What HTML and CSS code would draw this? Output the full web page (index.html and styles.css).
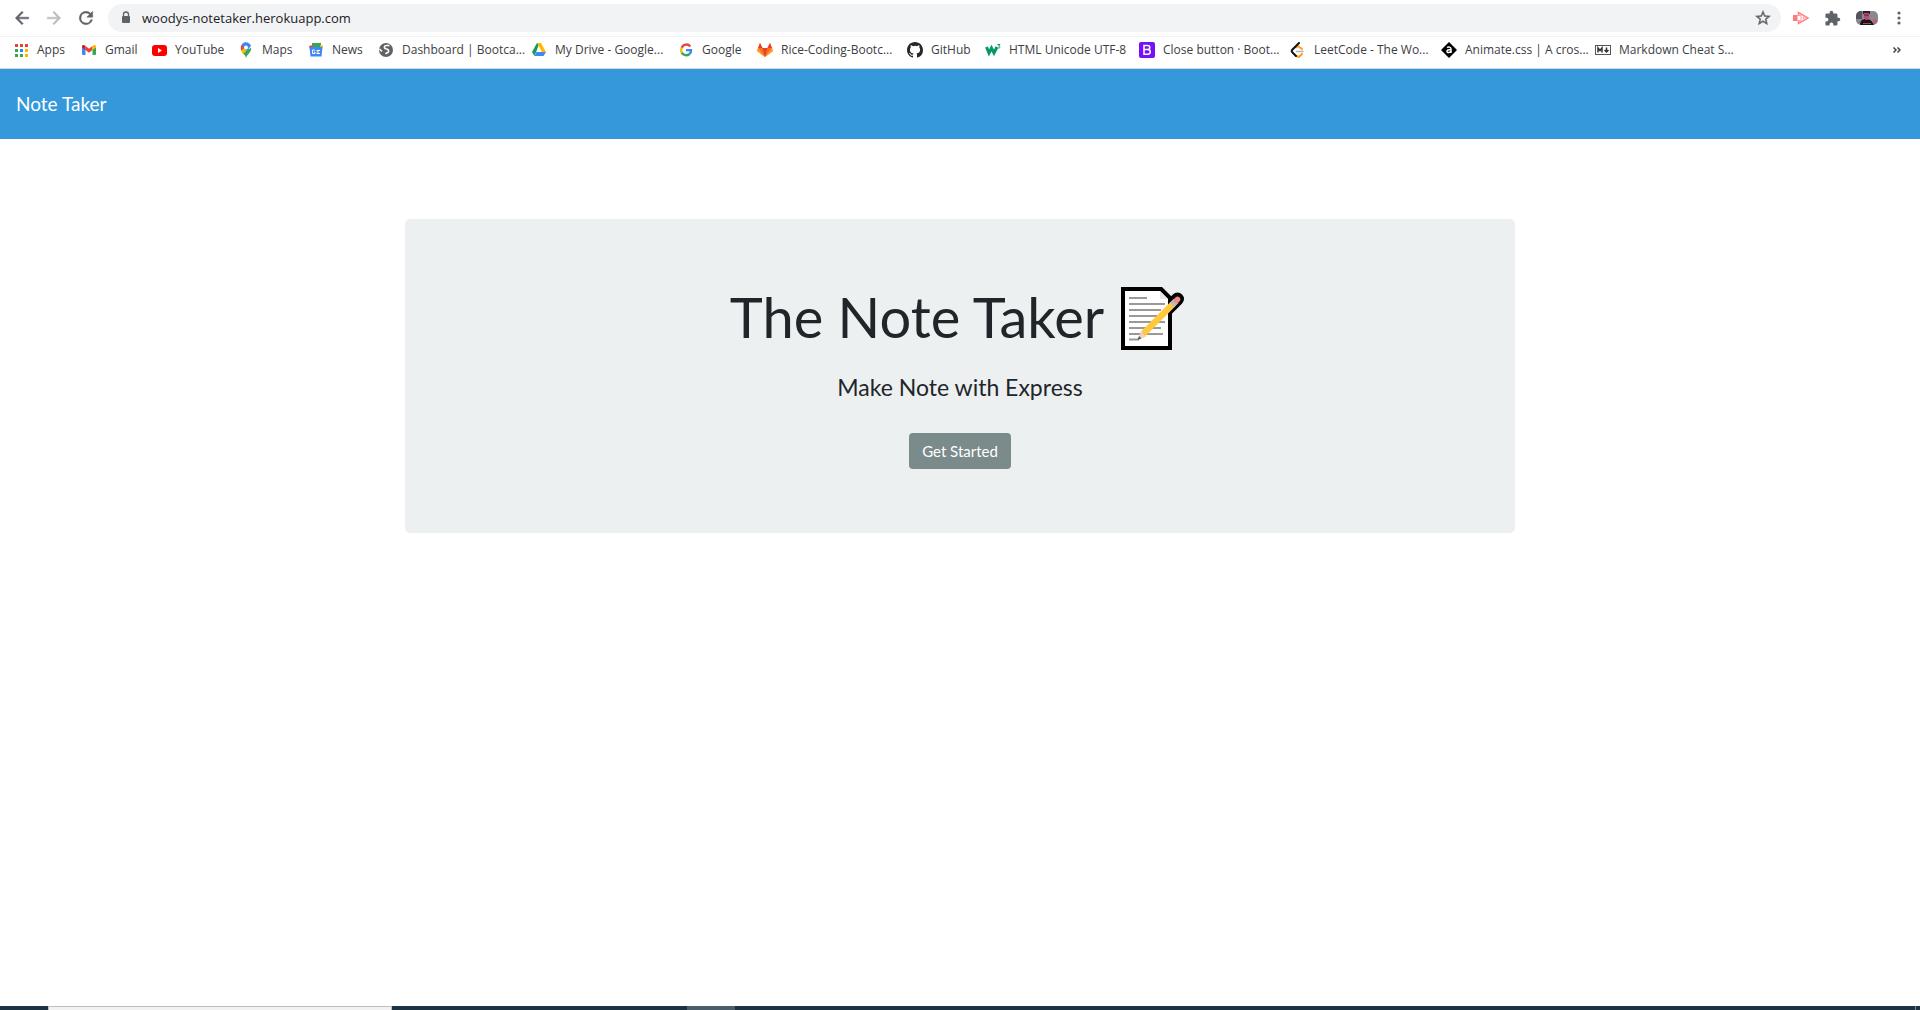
FILE: index.html
```html
<!DOCTYPE html>
<html lang="en">
<head>
<meta charset="utf-8">
<title>Note Taker</title>
<link rel="stylesheet" href="styles.css">
</head>
<body>
<header class="browser">
  <div class="toolbar">
    <button class="tool" aria-label="Back"><svg viewBox="0 0 24 24" width="20" height="20"><path d="M20 11H7.800l5.600-5.600L12 4l-8 8 8 8 1.400-1.400L7.800 13H20z" stroke="currentColor" stroke-width=".6"/></svg></button>
    <button class="tool tool-off" aria-label="Forward" disabled><svg viewBox="0 0 24 24" width="20" height="20"><path d="M4 11h12.200l-5.600-5.600L12 4l8 8-8 8-1.400-1.400 5.600-5.600H4z" stroke="currentColor" stroke-width=".6"/></svg></button>
    <button class="tool" aria-label="Reload"><svg viewBox="0 0 24 24" width="20" height="20"><path d="M17.650 6.350A7.960 7.960 0 0 0 12 4a8 8 0 1 0 7.730 10h-2.080A6 6 0 1 1 12 6c1.660 0 3.140.69 4.220 1.780L13 11h7V4z" stroke="currentColor" stroke-width=".6"/></svg></button>
    <div class="address">
      <svg viewBox="0 0 10 14" width="10" height="14" class="lock"><path d="M2.500 6V3.500a2.500 2.500 0 0 1 5 0V6" fill="none" stroke="currentColor" stroke-width="1.300"/><rect x="1" y="5" width="8" height="7" rx="1"/></svg>
      <input class="url" type="text" aria-label="Address" value="woodys-notetaker.herokuapp.com">
      <button class="star" aria-label="Bookmark this tab"><svg viewBox="0 0 24 24" width="18" height="18"><path stroke="currentColor" stroke-width=".5" d="M22 9.240l-7.190-.62L12 2 9.190 8.630 2 9.240l5.460 4.730L5.820 21 12 17.270 18.180 21l-1.630-7.030zM12 15.400l-3.760 2.270 1-4.280-3.320-2.880 4.380-.38L12 6.100l1.710 4.040 4.380.38-3.320 2.880 1 4.280z"/></svg></button>
    </div>
    <div class="extensions">
      <button class="ext" aria-label="Screen recorder"><svg viewBox="0 0 16 14" width="16" height="14"><path d="M0 4h4.500v6H0z" fill="#ff7b7b"/><path d="M5.500 4.500V1.500L15 7l-9.500 5.500v-3" fill="none" stroke="#ff8080" stroke-width="1.500"/><path d="M4.500 4.500H8v5H4.500" fill="none" stroke="#ff9a9a"/><circle cx="10.500" cy="7" r="1" fill="#ff9a9a"/></svg></button>
      <button class="ext" aria-label="Extensions"><svg viewBox="0 0 24 24" width="17" height="17"><path d="M20.500 11H19V7a2 2 0 0 0-2-2h-4V3.500a2.500 2.500 0 0 0-5 0V5H4a2 2 0 0 0-2 2v3.800h1.500a2.700 2.700 0 0 1 0 5.400H2V20c0 1.100.9 2 2 2h3.800v-1.500a2.700 2.700 0 0 1 5.400 0V22H17a2 2 0 0 0 2-2v-4h1.500a2.500 2.500 0 0 0 0-5z"/></svg></button>
      <button class="ext" aria-label="Profile"><svg viewBox="0 0 22 14" width="22" height="14"><defs><clipPath id="face"><rect width="22" height="14" rx="5"/></clipPath></defs><g clip-path="url(#face)"><path fill="#8d8793" d="M0 0h22v14H0z"/><path fill="#55545c" d="M0 0h6v8H0z"/><path fill="#17161d" d="M4 14c0-4 2-6 6-6s6 2 8 6z"/><path fill="#261f28" d="M7 0h7v3H7z"/><path fill="#c4476f" d="M8 2h5v4.500L11.500 9h-2L8 6.500z"/><path fill="#5a2338" d="M8 3.500h5v1H8z"/><path fill="#bd4338" d="M7 12h8v1H7z"/><path fill="#c35a5c" d="M17 9l3-1 1 3-3 2z"/></g></svg></button>
      <button class="ext" aria-label="Menu"><svg viewBox="0 0 4 14" width="4" height="14"><circle cx="2" cy="2" r="1.600"/><circle cx="2" cy="7" r="1.600"/><circle cx="2" cy="12" r="1.600"/></svg></button>
    </div>
  </div>
  <nav class="bookmarks" aria-label="Bookmarks">
    <a class="mark" href="#"><svg viewBox="0 0 16 16"><path fill="#ea4335" d="M2 2h3v3H2zM7 2h3v3H7zM12 2h3v3h-3z"/><path fill="#34a853" d="M2 7h3v3H2zM2 12h3v3H2zM7 12h3v3H7z"/><path fill="#1a8cff" d="M7 7h3v3H7z"/><path fill="#fbb500" d="M12 7h3v3h-3zM12 12h3v3h-3z"/></svg>Apps</a>
    <a class="mark" href="#"><svg viewBox="0 0 16 16"><path fill="#4285f4" d="M1 5l3.500 2.500V13H2a1 1 0 0 1-1-1z"/><path fill="#34a853" d="M15 5l-3.500 2.500V13H14a1 1 0 0 0 1-1z"/><path fill="#ea4335" d="M4.500 4L8 6.700 11.500 4v4L8 10.700 4.500 8z"/><path fill="#c5221f" d="M1 4.500C1 2.800 2.700 2.500 4.500 4v4L1 5.500z"/><path fill="#fbbc04" d="M15 4.500c0-1.700-1.700-2-3.500-.5v4L15 5.500z"/></svg>Gmail</a>
    <a class="mark" href="#"><svg viewBox="0 0 16 16"><rect x="1" y="3" width="15" height="11" rx="3" fill="#f00"/><path fill="#fff" d="M7 6l4 2.500L7 11z"/></svg>YouTube</a>
    <a class="mark" href="#"><svg viewBox="0 0 16 16"><path fill="#34a853" d="M8 16c.5-3 5-5 5.300-10L3.500 9.500C5 12 7.500 13 8 16z"/><path fill="#fbbc04" d="M3 7.500l4-4 3.500 3.500-5.500 5C4 10.500 3.200 9 3 7.500z"/><path fill="#ea4335" d="M4 2.200L7.500 5 3.200 8.500C2.300 6 2.800 3.800 4 2.200z"/><path fill="#4285f4" d="M4 2.200C6.500-.8 11.500-.3 13 4l-4.500 5L5 5z"/><circle cx="8" cy="5.500" r="2" fill="#fff"/></svg>Maps</a>
    <a class="mark" href="#"><svg viewBox="0 0 16 16"><path fill="#34a853" d="M4 1h9v6H4z"/><path fill="#fbbc04" d="M12 3l3 .5-1 4h-2z"/><path fill="#ea4335" d="M1 4l4-1v4H2z"/><path d="M1.500 5h13l-1 9.500h-11z" fill="#4285f4"/><path fill="none" stroke="#fff" d="M7 8H4.500v3.500H7V10H6M8.500 8.500H12M8.500 10H11M8.500 11.500H12"/></svg>News</a>
    <a class="mark" href="#"><svg viewBox="0 0 16 16"><circle cx="8" cy="8" r="7" fill="#5f6368"/><path fill="none" stroke="#fff" stroke-width="1.600" d="M11.500 3.500H8.500C5.500 3.500 6 7 8.500 7s3 3.500 0 4l-1 1M1.500 7L4 9.500"/></svg>Dashboard | Bootca...</a>
    <a class="mark" href="#"><svg viewBox="0 0 16 16"><path fill="#0f9d58" d="M6 1h2.500L5.500 9 3.500 14 1 10z"/><path fill="#ffba00" d="M6 1h4l5 9h-4z"/><path fill="#4285f4" d="M5.500 10H15l-2.500 4h-9z"/></svg>My Drive - Google...</a>
    <a class="mark" href="#"><svg viewBox="0 0 16 16"><g fill="none" stroke-width="2.400"><path stroke="#ea4335" d="M12.300 4.500A5 5 0 0 0 3.700 5.800"/><path stroke="#fbbc04" d="M3.700 5.800a5 5 0 0 0 0 4.600"/><path stroke="#34a853" d="M3.700 10.400a5 5 0 0 0 7.800 1.600"/><path stroke="#4285f4" d="M11.500 12A5 5 0 0 0 13 8.100H8"/></g></svg>Google</a>
    <a class="mark" href="#"><svg viewBox="0 0 16 16"><path fill="#fc6d26" d="M0 9l1-3 2-5 2.500 5h5L13 1l2 5 1 3-8 6z"/><path fill="#e24329" d="M5.500 6h5L8 15zM1 6l2-5 2.500 5zM15 6l-2-5-2.500 5z"/><path fill="#fca326" d="M1 6L0 9l8 6zM15 6l1 3-8 6z"/></svg>Rice-Coding-Bootc...</a>
    <a class="mark" href="#"><svg viewBox="0 0 16 16"><path fill="#24292e" fill-rule="evenodd" d="M8 0C3.580 0 0 3.580 0 8c0 3.540 2.290 6.530 5.470 7.590.4.070.55-.17.55-.38 0-.19-.01-.82-.01-1.490-2.010.37-2.530-.49-2.690-.94-.09-.23-.48-.94-.82-1.130-.28-.15-.68-.52-.01-.53.63-.01 1.080.58 1.230.82.72 1.210 1.870.87 2.330.66.070-.52.28-.87.51-1.070-1.780-.2-3.640-.89-3.640-3.950 0-.87.31-1.590.82-2.150-.08-.2-.36-1.020.08-2.120 0 0 .67-.21 2.200.82a7.600 7.600 0 0 1 4 0c1.530-1.040 2.200-.82 2.200-.82.44 1.100.16 1.920.08 2.120.51.56.82 1.270.82 2.150 0 3.070-1.870 3.750-3.650 3.950.29.25.54.73.54 1.480 0 1.070-.01 1.930-.01 2.200 0 .21.15.46.55.38A8 8 0 0 0 16 8c0-4.420-3.580-8-8-8z"/></svg>GitHub</a>
    <a class="mark" href="#"><svg viewBox="0 0 16 16"><path fill="none" stroke="#059862" stroke-width="3" d="M1.500 5l2.500 6 2.500-5 2.500 5 3-6"/><path fill="none" stroke="#059862" d="M12.500 2.500H15L13.500 4c2 0 2 2.500-.5 2"/></svg>HTML Unicode UTF-8</a>
    <a class="mark" href="#"><svg viewBox="0 0 16 16"><rect width="16" height="16" rx="2" fill="#7510f7"/><path fill="none" stroke="#fff" stroke-width="1.500" d="M5 3.500h3.500c3 0 3 4 0 4H5h4c3 0 3 4.700 0 4.700H5z"/></svg>Close button · Boot...</a>
    <a class="mark" href="#"><svg viewBox="0 0 16 16"><g fill="none" stroke-width="2" stroke-linecap="round"><path stroke="#ffa116" d="M6 5.500L8 4l4 3M12 12l-3 3-3-1"/><path stroke="#111" d="M9 1L2.500 7.500Q1 9 2.500 10.500L6 14"/><path stroke="#b3b3b3" stroke-width="1.500" d="M6.500 9.500H13"/></g></svg>LeetCode - The Wo...</a>
    <a class="mark" href="#"><svg viewBox="0 0 16 16"><path d="M8 0l8 8-8 8-8-8z" fill="#000"/><path fill="none" stroke="#fff" stroke-width="1.500" d="M6 5.500c1.500-1 4-.5 4 1.500v4M10 7.800C7 7.500 6 8 6 9.500s3 1.500 4-.5"/></svg>Animate.css | A cros...</a>
    <a class="mark" href="#"><svg viewBox="0 0 16 16"><rect x=".5" y="3.500" width="15" height="9" fill="#fff" stroke="#555"/><path fill="none" stroke="#333" stroke-width="1.500" d="M3 10.500V6l2 2.500L7 6v4.500M11.500 5.500v4M9.500 8l2 2 2-2"/></svg>Markdown Cheat S...</a>
    <button class="more" aria-label="More bookmarks"><svg viewBox="0 0 8 6" width="8" height="6"><path fill="none" stroke="#444" stroke-width="1.500" d="M.5.500L3 3 .5 5.500M4.500.500L7 3 4.500 5.500"/></svg></button>
  </nav>
</header>
<nav class="navbar"><a class="brand" href="#">Note Taker</a></nav>
<main class="page">
  <section class="hero">
    <h1 class="title">The Note Taker <svg class="memo" viewBox="0 0 77 67" role="img" aria-label="Memo"><path d="M8 4h41l10 10V67H8z" fill="#000"/><path d="M54 26.500L64.500 16" stroke="#000" stroke-width="13" stroke-linecap="round"/><path d="M12 8h35l8 8v47H12z" fill="#fff"/><path d="M47 8v8h8z" fill="#e6e7e8"/><path d="M16 15h18M16 21h36M16 27h32M16 33h36M16 39h36M16 45h32M16 51h34M16 56.500h10" stroke="#999" stroke-width="1.800"/><path d="M25 56.500l3-8.500 5.500 5.500z" fill="#f3d0b8"/><path d="M24.500 57l1.500-4 2.500 2.500z" fill="#555"/><path d="M30.500 50.500L60 21" stroke="#ffc83d" stroke-width="6.500"/><path d="M59 22l4-4" stroke="#bdbdbd" stroke-width="6.500"/><path d="M63.500 17.500l1-1" stroke="#f28b82" stroke-width="5.500" stroke-linecap="round"/></svg></h1>
    <p class="subtitle">Make Note with Express</p>
    <a class="start" href="#">Get Started</a>
  </section>
</main>
<footer class="taskbar"><span class="search"></span><span class="active"></span><span class="desktop"></span></footer>
</body>
</html>
```
FILE: styles.css
```css
* { box-sizing: border-box; }

body {
  margin: 0;
  min-height: 100vh;
  display: flex;
  flex-direction: column;
  background: #fff;
  color: #212529;
  font-family: Lato, sans-serif;
}

button {
  padding: 0;
  border: 0;
  background: none;
  color: #5f6368;
}

svg { display: block; fill: currentColor; flex: none; }

/* Browser chrome */
.browser {
  font-family: "Open Sans", sans-serif;
  border-bottom: 1px solid #d5d7da;
}

.toolbar {
  display: flex;
  align-items: center;
  gap: 12px;
  height: 36px;
  padding: 0 19px 0 12px;
}

.tool { width: 20px; height: 20px; }
.tool-off { color: #babcbe; }

.address {
  flex: 1;
  display: flex;
  align-items: center;
  height: 28px;
  padding: 0 9px 0 13px;
  border-radius: 14px;
  background: #f1f3f4;
}

.lock { color: #5f6368; }

.url {
  flex: 1;
  min-width: 0;
  margin-left: 11px;
  padding: 0;
  border: 0;
  outline: 0;
  background: none;
  color: #202124;
  font: 13px/20px "Open Sans", sans-serif;
}

.extensions {
  display: flex;
  align-items: center;
  gap: 15px;
}

.ext:last-child { margin-left: 4px; }

.bookmarks {
  display: grid;
  grid-template-columns: 68px 70px 87px 70px 70px 153px 147px 79px 150px 78px 154px 151px 151px 154px 1fr auto;
  align-items: center;
  height: 32px;
  padding: 0 19px 5px 13px;
  border-top: 1px solid #f2f2f2;
}

.mark {
  display: flex;
  align-items: center;
  gap: 8px;
  color: #3c4043;
  font-size: 12px;
  line-height: 16px;
  text-decoration: none;
  white-space: nowrap;
}

.mark svg { width: 16px; height: 16px; }

/* Page */
.navbar {
  display: flex;
  align-items: center;
  height: 70px;
  padding: 0 16px;
  background: #3498db;
}

.brand {
  color: #fff;
  font-size: 19px;
  line-height: 30px;
  text-decoration: none;
}

.page {
  flex: 1;
  padding: 80px 16px;
}

.hero {
  display: flex;
  flex-direction: column;
  align-items: center;
  max-width: 1110px;
  margin: 0 auto;
  padding: 64px 32px;
  border-radius: 5px;
  background: #ecf0f1;
}

.title {
  display: flex;
  align-items: center;
  gap: 9px;
  margin: 0 0 20px;
  font-size: 56px;
  font-weight: 400;
  line-height: 67px;
}

.memo { width: 77px; height: 67px; }

.subtitle {
  margin: 0 0 29px;
  font-size: 23px;
  line-height: 34px;
}

.start {
  padding: 6px 13px;
  border-radius: 4px;
  background: #7b8a8b;
  color: #fff;
  font-size: 15px;
  line-height: 24px;
  text-decoration: none;
}

/* Strip of the system taskbar */
.taskbar {
  display: flex;
  height: 4px;
  padding: 0 4px 0 48px;
  background: #1e3342;
}

.search {
  width: 344px;
  border: 1px solid #bfbfbf;
  border-bottom: 0;
  background: #f2f2f2;
}

.active {
  width: 48px;
  margin-left: 295px;
  background: #4a5d69;
}

.desktop {
  width: 1px;
  margin-left: auto;
  background: #7b8791;
}
```
